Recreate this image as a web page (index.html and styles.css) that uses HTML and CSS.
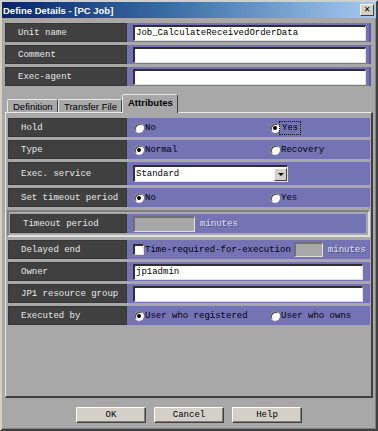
FILE: index.html
```html
<!DOCTYPE html>
<html lang="en">
<head>
    <meta charset="UTF-8">
    <title>Define Details - [PC Job]</title>
    <link rel="stylesheet" href="styles.css">
</head>
<body>
    <div class="window">
        <div class="titlebar">
            <span class="title">Define Details - [PC Job]</span>
            <span class="close-btn">&#x2715;</span>
        </div>

        <div class="content">
            <div class="fields">
                <div class="row">
                    <div class="label">Unit name</div>
                    <div class="value"><div class="field">Job_CalculateReceivedOrderData</div></div>
                </div>
                <div class="row">
                    <div class="label">Comment</div>
                    <div class="value"><div class="field"></div></div>
                </div>
                <div class="row">
                    <div class="label">Exec-agent</div>
                    <div class="value"><div class="field"></div></div>
                </div>
            </div>

            <div class="tabs">
                <div class="tab">Definition</div>
                <div class="tab">Transfer File</div>
                <div class="tab active">Attributes</div>
            </div>

            <div class="panel">
                <div class="row">
                    <div class="label">Hold</div>
                    <div class="value options">
                        <span class="option"><span class="radio"></span>No</span>
                        <span class="option"><span class="radio checked"></span><span class="focus">Yes</span></span>
                    </div>
                </div>
                <div class="row">
                    <div class="label">Type</div>
                    <div class="value options">
                        <span class="option"><span class="radio checked"></span>Normal</span>
                        <span class="option"><span class="radio"></span>Recovery</span>
                    </div>
                </div>
                <div class="row tall">
                    <div class="label">Exec. service</div>
                    <div class="value">
                        <div class="select">
                            <span class="select-text">Standard</span>
                            <span class="select-btn"></span>
                        </div>
                    </div>
                </div>
                <div class="row">
                    <div class="label">Set timeout period</div>
                    <div class="value options">
                        <span class="option"><span class="radio checked"></span>No</span>
                        <span class="option"><span class="radio"></span>Yes</span>
                    </div>
                </div>
                <div class="group">
                    <div class="row">
                        <div class="label">Timeout period</div>
                        <div class="value">
                            <div class="field disabled short"></div>
                            <span class="unit">minutes</span>
                        </div>
                    </div>
                </div>
                <div class="row">
                    <div class="label">Delayed end</div>
                    <div class="value">
                        <span class="checkbox"></span>
                        <span class="check-text">Time-required-for-execution</span>
                        <div class="field disabled mini"></div>
                        <span class="unit">minutes</span>
                    </div>
                </div>
                <div class="row">
                    <div class="label">Owner</div>
                    <div class="value"><div class="field narrow">jp1admin</div></div>
                </div>
                <div class="row">
                    <div class="label">JP1 resource group</div>
                    <div class="value"><div class="field narrow"></div></div>
                </div>
                <div class="row">
                    <div class="label">Executed by</div>
                    <div class="value options">
                        <span class="option"><span class="radio checked"></span>User who registered</span>
                        <span class="option"><span class="radio"></span>User who owns</span>
                    </div>
                </div>
            </div>

            <div class="buttons">
                <div class="button">OK</div>
                <div class="button">Cancel</div>
                <div class="button">Help</div>
            </div>
        </div>
    </div>
</body>
</html>
```

FILE: styles.css
```css
* {
    margin: 0;
    padding: 0;
    box-sizing: border-box;
}

body {
    background: #a8a8a8;
    font-family: "Liberation Mono", "DejaVu Sans Mono", monospace;
    font-size: 9px;
    color: #000;
}

.window {
    width: 378px;
    height: 431px;
    background: #a8a8a8;
    border: 2px solid;
    border-color: #d4d0c8 #404040 #404040 #d4d0c8;
    box-shadow: inset -1px -1px 0 #808080;
    display: flex;
    flex-direction: column;
    overflow: hidden;
}

.titlebar {
    height: 16px;
    flex: none;
    background: linear-gradient(to right, #0a246a 0%, #3a6ea5 45%, #a6caf0 100%);
    display: flex;
    align-items: center;
    justify-content: space-between;
    padding: 0 2px 0 1px;
}

.title {
    font-family: "Liberation Sans", Arial, sans-serif;
    font-weight: bold;
    font-size: 9.5px;
    color: #fff;
}

.close-btn {
    width: 14px;
    height: 12px;
    background: #d4d0c8;
    border: 1px solid;
    border-color: #fff #404040 #404040 #fff;
    font-family: "DejaVu Sans", sans-serif;
    font-size: 8px;
    font-weight: bold;
    line-height: 10px;
    text-align: center;
    color: #000;
}

.content {
    flex: 1;
    padding: 5px 3px 0 3px;
    display: flex;
    flex-direction: column;
}

.fields {
    display: flex;
    flex-direction: column;
    gap: 3px;
    margin-right: 2px;
}

.row {
    display: flex;
    height: 19px;
    flex: none;
}

.label {
    flex: none;
    width: 122px;
    background: #404040;
    border: 1px solid #363636;
    color: #e8e8e8;
    padding-left: 12px;
    display: flex;
    align-items: center;
    white-space: nowrap;
}

.value {
    flex: 1;
    min-width: 0;
    background: #7474b4;
    border-right: 2px solid #5c5c9c;
    display: flex;
    align-items: center;
    padding: 0 3px 0 6px;
    white-space: nowrap;
}

.field {
    flex: 1;
    height: 16px;
    background: #fff;
    border: solid;
    border-width: 2px 1px 1px 2px;
    border-color: #303030 #e0e0e0 #e0e0e0 #303030;
    padding-left: 1px;
    line-height: 13px;
}

.field.narrow {
    flex: none;
    width: 230px;
}

.field.disabled {
    flex: none;
    background: #a8a8a8;
    border-color: #707070 #e0e0e0 #e0e0e0 #707070;
}

.field.short {
    width: 62px;
}

.field.mini {
    width: 29px;
    height: 15px;
    margin-left: 3px;
}

.unit {
    color: #e4e4ee;
    text-shadow: 1px 1px 0 #50508c;
    margin-left: 5px;
}

/* tabs */
.tabs {
    display: flex;
    align-items: flex-end;
    height: 18px;
    flex: none;
    margin-top: 8px;
    padding-left: 2px;
    position: relative;
    z-index: 1;
}

.tab {
    flex: none;
    height: 13px;
    font-family: "Liberation Sans", Arial, sans-serif;
    font-size: 9.5px;
    white-space: nowrap;
    padding: 0 4px 0 5px;
    border: 1px solid;
    border-bottom: none;
    border-color: #e8e8e8 #404040 transparent #e8e8e8;
    border-radius: 2px 2px 0 0;
    display: flex;
    align-items: center;
    background: #a8a8a8;
}

.tab:nth-child(1) { width: 51px; }
.tab:nth-child(2) { width: 64px; }

.tab.active {
    width: 56px;
    height: 19px;
    margin-bottom: -1px;
    font-weight: bold;
    align-items: flex-start;
    padding-top: 2px;
}

.panel {
    height: 286px;
    flex: none;
    border: solid;
    border-width: 1px 2px 2px 1px;
    border-color: #e8e8e8 #404040 #404040 #e8e8e8;
    padding: 5px 1px 0 2px;
    display: flex;
    flex-direction: column;
    gap: 3px;
}

.panel .label {
    width: 119px;
}

.panel .value {
    border-right: none;
}

.row.tall {
    height: 23px;
}

.options {
    padding-left: 7px;
}

.option {
    flex: none;
    display: flex;
    align-items: center;
    width: 136px;
}

.radio {
    flex: none;
    width: 10px;
    height: 10px;
    border-radius: 50%;
    background: #fff;
    border: 1px solid;
    border-color: #808080 #f0f0f0 #f0f0f0 #808080;
    box-shadow: inset 1px 1px 0 #404040;
    margin-right: 1px;
    display: flex;
    align-items: center;
    justify-content: center;
}

.radio.checked::after {
    content: "";
    width: 4px;
    height: 4px;
    border-radius: 50%;
    background: #000;
}

.focus {
    outline: 1px dotted #000;
    outline-offset: 1px;
    padding: 0 1px;
}

.select {
    flex: none;
    width: 155px;
    height: 17px;
    background: #fff;
    border: solid;
    border-width: 2px 1px 1px 2px;
    border-color: #303030 #e0e0e0 #e0e0e0 #303030;
    display: flex;
    align-items: center;
    justify-content: space-between;
}

.select-text {
    padding-left: 1px;
}

.select-btn {
    width: 13px;
    height: 13px;
    background: #d4d0c8;
    border: 1px solid;
    border-color: #fff #404040 #404040 #fff;
    display: flex;
    align-items: center;
    justify-content: center;
}

.select-btn::after {
    content: "";
    border-left: 3px solid transparent;
    border-right: 3px solid transparent;
    border-top: 3px solid #000;
}

.group {
    flex: none;
    margin-left: -1px;
    border: 2px solid;
    border-color: #808080 #e0e0e0 #e0e0e0 #808080;
    padding: 2px 2px 2px 1px;
}

.group .label {
    width: 117px;
}

.checkbox {
    flex: none;
    width: 11px;
    height: 11px;
    background: #fff;
    border: solid;
    border-width: 2px 1px 1px 2px;
    border-color: #303030 #e0e0e0 #e0e0e0 #303030;
    margin-right: 1px;
}

.buttons {
    display: flex;
    justify-content: center;
    gap: 8px;
    margin-top: 9px;
}

.button {
    width: 70px;
    height: 16px;
    background: #d4d0c8;
    border: 1px solid;
    border-color: #fff #404040 #404040 #fff;
    box-shadow: inset -1px -1px 0 #808080;
    display: flex;
    align-items: center;
    justify-content: center;
}
```
